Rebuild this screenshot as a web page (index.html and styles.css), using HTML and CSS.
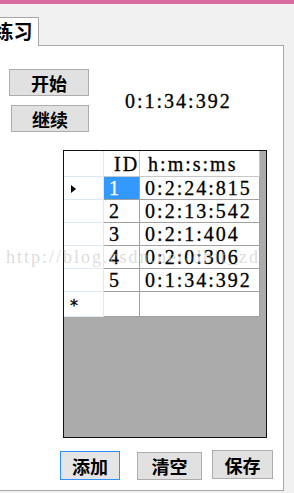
FILE: index.html
```html
<!DOCTYPE html>
<html lang="zh">
<head>
    <meta charset="UTF-8">
    <title>练习</title>
    <link rel="stylesheet" href="styles.css">
</head>
<body>
<div class="topbar"></div>

<div class="tabs">
    <div class="tab">练习</div>
</div>

<div class="panel">
    <div class="timer-row">
        <div class="btn-col">
            <button class="btn btn-start">开始</button>
            <button class="btn btn-resume">继续</button>
        </div>
        <div class="clock">0:1:34:392</div>
    </div>

    <div class="grid">
        <table>
            <tr class="head">
                <td class="rowhead"></td>
                <td class="col-id">ID</td>
                <td class="col-time">h:m:s:ms</td>
            </tr>
            <tr>
                <td class="rowhead"><span class="arrow"></span></td>
                <td class="col-id selected">1</td>
                <td class="col-time">0:2:24:815</td>
            </tr>
            <tr>
                <td class="rowhead"></td>
                <td class="col-id">2</td>
                <td class="col-time">0:2:13:542</td>
            </tr>
            <tr>
                <td class="rowhead"></td>
                <td class="col-id">3</td>
                <td class="col-time">0:2:1:404</td>
            </tr>
            <tr>
                <td class="rowhead"></td>
                <td class="col-id">4</td>
                <td class="col-time">0:2:0:306</td>
            </tr>
            <tr>
                <td class="rowhead"></td>
                <td class="col-id">5</td>
                <td class="col-time">0:1:34:392</td>
            </tr>
            <tr>
                <td class="rowhead star">*</td>
                <td class="col-id"></td>
                <td class="col-time"></td>
            </tr>
        </table>
    </div>

    <div class="actions">
        <button class="btn btn-add">添加</button>
        <button class="btn btn-clear">清空</button>
        <button class="btn btn-save">保存</button>
    </div>

    <div class="watermark">http://blog.csdn.net/dbit_zd</div>
</div>
</body>
</html>
```

FILE: styles.css
```css
* {
    margin: 0;
    padding: 0;
    box-sizing: border-box;
}

body {
    background: #f0f0f0;
    font-family: "Noto Sans CJK SC", sans-serif;
    color: #000;
    overflow: hidden;
}

.topbar {
    height: 4px;
    background: #d86ca1;
}

/* tab strip */
.tabs {
    height: 42px;
    display: flex;
    align-items: flex-end;
}

.tab {
    position: relative;
    z-index: 1;
    margin-left: -11px;
    width: 50px;
    height: 29px;
    background: #fff;
    border-top: 1px solid #a8a8a8;
    border-right: 1px solid #a8a8a8;
    font-size: 19px;
    line-height: 26px;
    text-align: center;
    font-weight: 700;
}

.panel {
    position: relative;
    margin-top: -1px;
    margin-left: -1px;
    width: 285px;
    height: 446px;
    background: #fff;
    border: 1px solid #a8a8a8;
}

/* buttons */
.btn {
    font-family: "Noto Sans CJK SC", sans-serif;
    font-size: 18px;
    font-weight: 700;
    background: #e1e1e1;
    border: 1px solid #adadad;
    color: #000;
    line-height: 24px;
    display: flex;
    align-items: center;
    justify-content: center;
}

.timer-row {
    display: flex;
    padding-top: 23px;
}

.btn-col {
    display: flex;
    flex-direction: column;
    gap: 9px;
}

.btn-start {
    margin-left: 9px;
    width: 80px;
    height: 27px;
}

.btn-resume {
    margin-left: 11px;
    width: 78px;
    height: 27px;
}

.clock {
    margin-left: 36px;
    margin-top: 21px;
    font-family: "Liberation Serif", serif;
    font-size: 20px;
    line-height: 22px;
    letter-spacing: 2px;
    -webkit-text-stroke: 0.3px #000;
}

/* data grid */
.grid {
    margin-top: 18px;
    margin-left: 63px;
    width: 204px;
    height: 288px;
    background: #ababab;
    border: 1px solid #111;
}

.grid table {
    border-collapse: separate;
    border-spacing: 0;
    font-family: "Liberation Serif", serif;
    font-size: 20px;
    letter-spacing: 2px;
    -webkit-text-stroke: 0.3px currentColor;
}

.grid td {
    height: 23px;
    background: #fff;
    border-right: 1px solid #a0a0a0;
    border-bottom: 1px solid #a0a0a0;
    padding: 0 0 0 5px;
    line-height: 20px;
    white-space: nowrap;
}

.grid .head td {
    height: 26px;
    border-color: #c8c8c8;
}

.grid td.rowhead {
    width: 40px;
    border-color: #dfe7f2;
    position: relative;
}

.grid td.col-id {
    width: 35px;
}

.grid .head td.col-id {
    padding-left: 10px;
}

.grid td.col-time {
    width: 120px;
}

.grid .head td.col-time {
    padding-left: 8px;
}

.grid td.selected {
    background: #3399ff;
    color: #fff;
}

.arrow {
    position: absolute;
    left: 7px;
    top: 8px;
    border-left: 5px solid #000;
    border-top: 4px solid transparent;
    border-bottom: 4px solid transparent;
}

.grid td.star {
    font-family: "DejaVu Sans", sans-serif;
    font-size: 16px;
    padding-left: 6px;
    padding-top: 4px;
}

/* bottom actions */
.actions {
    display: flex;
    align-items: flex-start;
    margin-top: 13px;
    margin-left: 60px;
}

.btn-add {
    width: 60px;
    height: 29px;
    border-color: #3390ff;
    background: #e5e5e5;
}

.btn-clear {
    margin-left: 17px;
    margin-top: 1px;
    width: 65px;
    height: 28px;
}

.btn-save {
    margin-left: 10px;
    margin-top: -1px;
    width: 61px;
    height: 29px;
}

.watermark {
    position: absolute;
    left: 6px;
    top: 201px;
    font-family: "Liberation Serif", serif;
    font-size: 18px;
    letter-spacing: 2px;
    color: rgba(190, 190, 190, 0.55);
    -webkit-text-stroke: 0;
    pointer-events: none;
    white-space: nowrap;
}
```
